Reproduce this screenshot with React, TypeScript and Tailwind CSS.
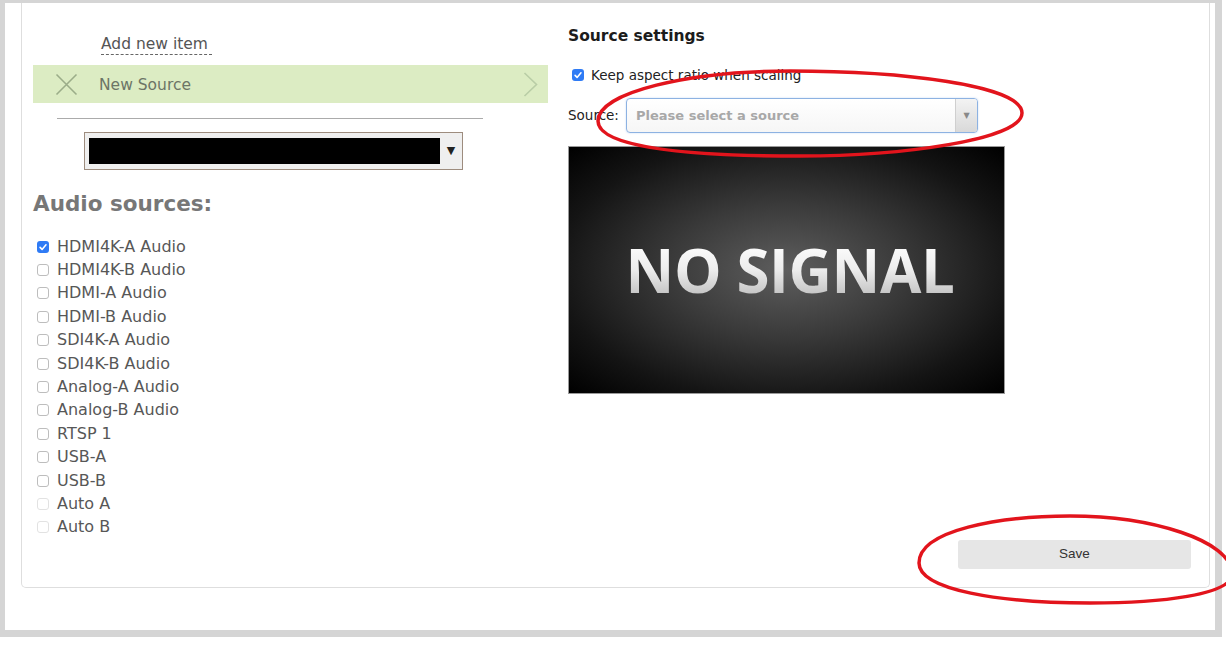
import React from "react";

const audioSources = [
  { label: "HDMI4K-A Audio", checked: true },
  { label: "HDMI4K-B Audio" },
  { label: "HDMI-A Audio" },
  { label: "HDMI-B Audio" },
  { label: "SDI4K-A Audio" },
  { label: "SDI4K-B Audio" },
  { label: "Analog-A Audio" },
  { label: "Analog-B Audio" },
  { label: "RTSP 1" },
  { label: "USB-A" },
  { label: "USB-B" },
  { label: "Auto A", disabled: true },
  { label: "Auto B", disabled: true },
];

function Checkbox({ checked, disabled }: { checked?: boolean; disabled?: boolean }) {
  if (checked) {
    return (
      <span className="flex h-[12px] w-[12px] shrink-0 items-center justify-center rounded-[3px] bg-[#2f7bf5]">
        <svg width="10" height="10" viewBox="0 0 12 12" fill="none">
          <path d="M2.5 6.5l2.4 2.4L9.6 3.4" stroke="#fff" strokeWidth="1.9" strokeLinecap="round" strokeLinejoin="round" />
        </svg>
      </span>
    );
  }
  return (
    <span
      className={`block h-[12px] w-[12px] shrink-0 rounded-[3px] border bg-white ${
        disabled ? "border-[#e2e2e2]" : "border-[#bdbdbd]"
      }`}
    />
  );
}

export default function App() {
  return (
    <div className="relative h-[646px] w-[1226px] overflow-hidden bg-white font-['DejaVu_Sans',sans-serif]">
      <div className="flex h-[637px] w-[1222px] flex-col border-t-[3px] border-r-[7px] border-b-[7px] border-l-[5px] border-[#d5d5d5] bg-white">
        <div className="ml-[16px] mr-[5px] flex h-[585px] rounded-b-[5px] border-x border-b border-[#dedede]">
          {/* left column */}
          <div className="flex w-[546px] shrink-0 flex-col pl-[11px]">
            <span className="mt-[32px] ml-[68px] block w-fit border-b border-dashed border-[#666] pr-[4px] text-[15.5px] leading-[19px] text-[#555]">
              Add new item
            </span>

            <div className="mt-[10px] flex h-[38px] w-[515px] items-center bg-[#dcecc3]">
              <svg className="ml-[22px]" width="23" height="23" viewBox="0 0 23 23" fill="none">
                <path d="M1.5 1.5l20 20M21.5 1.5l-20 20" stroke="#9bad89" strokeWidth="1.6" />
              </svg>
              <span className="mt-[3px] ml-[21px] text-[15.5px] text-[#6c7566]">New Source</span>
              <svg className="ml-auto mr-[10px]" width="15" height="25" viewBox="0 0 15 25" fill="none">
                <path d="M1.5 1l12 11.5L1.5 24" stroke="#b9cda6" strokeWidth="1.6" />
              </svg>
            </div>

            <div className="mt-[15px] ml-[24px] h-px w-[426px] bg-[#ababab]" />

            <div className="mt-[13px] ml-[51px] flex h-[38px] w-[379px] border border-[#9d8c7e] bg-[#efefef]">
              <div className="mt-[5px] ml-[4px] h-[26px] w-[351px] bg-black" />
              <div className="flex flex-1 items-center justify-center text-[11px] text-[#222]">▼</div>
            </div>

            <h2 className="mt-[21px] text-[21.5px] font-bold leading-[26px] text-[#777]">Audio sources:</h2>

            <ul className="mt-[18px]">
              {audioSources.map((s) => (
                <li key={s.label} className="flex h-[23.4px] items-center">
                  <span className="ml-[4px]">
                    <Checkbox checked={s.checked} disabled={s.disabled} />
                  </span>
                  <span className="ml-[8px] text-[16px] text-[#575757]">{s.label}</span>
                </li>
              ))}
            </ul>
          </div>

          {/* right column */}
          <div className="flex flex-1 flex-col pr-[18px]">
            <h3 className="mt-[23px] text-[15.5px] font-bold leading-[20px] text-[#1c1c1c]">Source settings</h3>

            <div className="mt-[19px] flex h-[20px] items-center">
              <span className="ml-[4px]">
                <Checkbox checked />
              </span>
              <span className="ml-[7px] text-[13.5px] text-[#222]">Keep aspect ratio when scaling</span>
            </div>

            <div className="mt-[13px] flex h-[35px] items-center">
              <span className="w-[58px] text-[13.5px] text-[#222]">Source:</span>
              <div className="flex h-[35px] w-[352px] overflow-hidden rounded-[4px] border border-[#8db2e2] bg-linear-to-b from-white to-[#f6f6f6] shadow-[0_0_2px_rgba(80,140,220,0.35)]">
                <span className="flex flex-1 items-center pl-[9px] text-[13px] font-bold text-[#a8a8a8]">
                  Please select a source
                </span>
                <span className="flex w-[22px] items-center justify-center border-l border-[#cfcfcf] bg-linear-to-b from-[#f3f3f3] to-[#d9d9d9] text-[8px] text-[#888]">
                  ▼
                </span>
              </div>
            </div>

            <div className="mt-[13px] flex h-[248px] w-[437px] items-center justify-center border border-[#9a9a9a] bg-[radial-gradient(ellipse_at_center,#5e5e5e_0%,#3a3a3a_38%,#141414_75%,#000_100%)]">
              <span className="ml-[7px] bg-linear-to-b from-white via-[#ececec] to-[#bcbcbc] bg-clip-text font-['Open_Sans',sans-serif] text-[60px] font-bold leading-none tracking-[-0.4px] text-transparent">
                NO SIGNAL
              </span>
            </div>

            <button className="mt-auto mb-[18px] h-[29px] w-[233px] self-end rounded-[3px] bg-[#e6e6e6] font-['Liberation_Sans',sans-serif] text-[13.5px] text-[#333]">
              Save
            </button>
          </div>
        </div>
      </div>

      {/* red annotation marks */}
      <svg className="pointer-events-none absolute inset-0" width="1226" height="646" viewBox="0 0 1226 646" fill="none">
        <path
          d="M598,121 C598,92 690,71 790,71 C900,71 1022,85 1022,113 C1022,140 900,156 800,156 C690,156 598,148 598,121 Z"
          stroke="#e2141c"
          strokeWidth="3.5"
        />
        <path
          d="M919,563 C919,530 1000,516 1070,516 C1150,516 1232,540 1232,574 C1232,595 1160,603 1090,603 C1000,603 919,590 919,563 Z"
          stroke="#e2141c"
          strokeWidth="3.5"
        />
      </svg>
    </div>
  );
}
